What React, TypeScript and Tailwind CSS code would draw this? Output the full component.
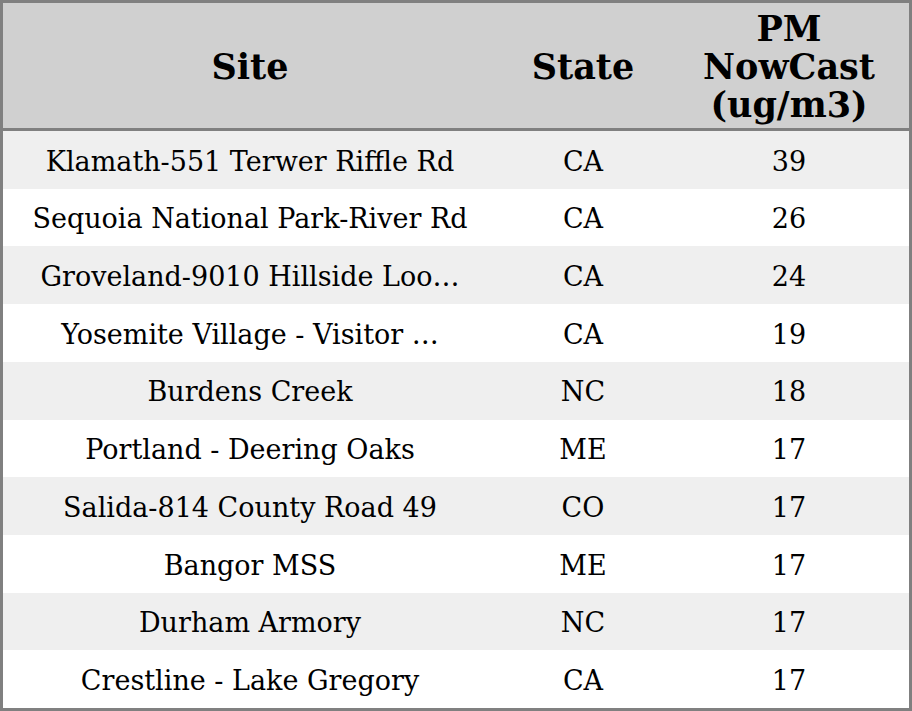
const rows: [string, string, string][] = [
  ["Klamath-551 Terwer Riffle Rd", "CA", "39"],
  ["Sequoia National Park-River Rd", "CA", "26"],
  ["Groveland-9010 Hillside Loo…", "CA", "24"],
  ["Yosemite Village - Visitor …", "CA", "19"],
  ["Burdens Creek", "NC", "18"],
  ["Portland - Deering Oaks", "ME", "17"],
  ["Salida-814 County Road 49", "CO", "17"],
  ["Bangor MSS", "ME", "17"],
  ["Durham Armory", "NC", "17"],
  ["Crestline - Lake Gregory", "CA", "17"],
];

export default function App() {
  return (
    <div className="flex h-[711px] w-[912px] flex-col border-[3px] border-[#808080] bg-white font-['DejaVu_Serif',serif] text-black">
      <div className="grid h-[128px] shrink-0 grid-cols-[494px_172px_1fr] items-center border-b-[3px] border-[#808080] bg-[#d0d0d0] pt-[2px] text-center text-[35px] font-bold leading-[38px]">
        <div>Site</div>
        <div>State</div>
        <div>
          PM
          <br />
          NowCast
          <br />
          (ug/m3)
        </div>
      </div>
      <div className="flex flex-1 flex-col">
        {rows.map(([site, state, value], i) => (
          <div
            key={site}
            className={`grid flex-1 grid-cols-[494px_172px_1fr] items-center pt-[4px] text-center text-[27px] ${
              i % 2 === 0 ? "bg-[#efefef]" : "bg-white"
            }`}
          >
            <div className="whitespace-nowrap">{site}</div>
            <div>{state}</div>
            <div>{value}</div>
          </div>
        ))}
      </div>
    </div>
  );
}
